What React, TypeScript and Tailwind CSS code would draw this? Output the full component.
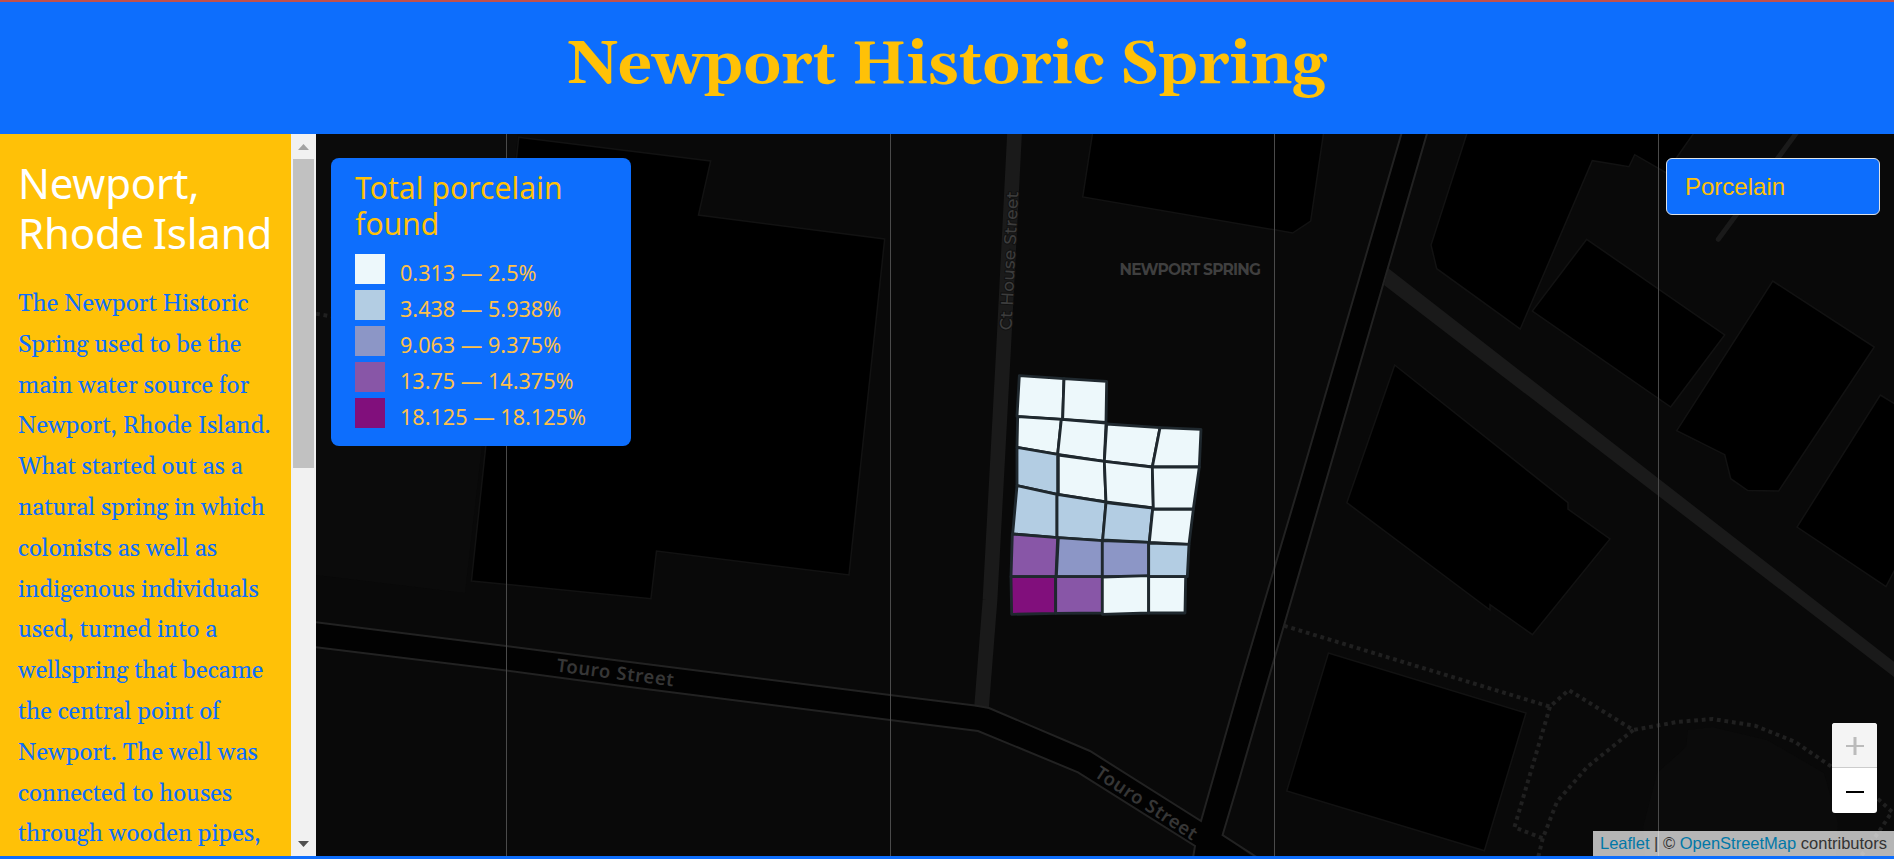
const PALETTE = ["#edf8fb", "#b3cde3", "#8c96c6", "#8856a7", "#810f7c"];

const LEGEND = [
  { color: "bg-[#edf8fb]", label: "0.313 — 2.5%" },
  { color: "bg-[#b3cde3]", label: "3.438 — 5.938%" },
  { color: "bg-[#8c96c6]", label: "9.063 — 9.375%" },
  { color: "bg-[#8856a7]", label: "13.75 — 14.375%" },
  { color: "bg-[#810f7c]", label: "18.125 — 18.125%" },
];

const BUILDINGS = [
  "518.7,137.3 710.7,161 698.5,215 884.7,239 849,575 656.5,551 651,598.7 471.4,581",
  "1093,130 1082.7,197 1292.7,233 1310.7,221 1324,130",
  "1468,130 1431,245 1436.7,268.7 1520.3,329 1592.3,160.7 1629,166.7 1634.7,154.7 1666,172.7 1696,130",
  "1586.7,239.3 1724.7,335 1670.7,407 1532.3,311",
  "1772.7,281 1874.3,347 1778.7,491 1747.7,490.5 1730.7,478.7 1724.7,454.7 1676.7,430.7",
  "1880.3,395 1900,407 1900,560 1886,586.7 1797,527",
  "1394.7,365 1568,502.7 1568,509 1610,539 1532.4,634.7 1490,604.7 1490,610 1346.8,502.7",
  "1328.4,653 1526,713 1484.4,850.7 1286.7,791",
];

const PATHS = [
  "M316 313.7L340 318",
  "M1284 625.7L1550 706.7L1568.7 690L1633.3 730L1677 722L1712.5 719L1755 725.7L1794.7 741.7L1830 765.7L1878 799L1892 811.7L1878 833L1861 856",
  "M1550 706.7L1514.4 827.3L1542.8 838.3",
  "M1633.3 730L1587.4 766.7L1557 801.7L1542.8 838.3L1538 858",
];

// Survey units: palette index followed by the outline, in thirds of a pixel.
const UNITS: [number, string][] = [
  [0, "178,77 312,86 308,208 171,199"],
  [0, "312,86 440,94 438,217 308,208"],
  [0, "173,200 304,208 293,313 171,292"],
  [0, "304,208 438,219 433,334 293,313"],
  [0, "440,222 600,233 577,351 433,334"],
  [0, "600,233 723,238 718,351 577,351"],
  [1, "171,292 293,313 293,433 171,407"],
  [0, "295,315 433,334 438,456 295,433"],
  [0, "433,334 577,351 580,474 438,456"],
  [0, "577,351 718,351 700,477 580,477"],
  [1, "171,407 291,433 291,563 158,552"],
  [1, "291,433 438,456 428,572 291,563"],
  [1, "438,458 578,474 568,577 428,570"],
  [0, "578,478 700,478 687,583 568,577"],
  [3, "157,552 293,563 288,680 153,680"],
  [2, "295,563 427,572 427,680 289,680"],
  [2, "427,572 566,577 566,679 427,680"],
  [1, "566,579 687,583 682,680 566,679"],
  [4, "153,680 287,680 287,790 155,793"],
  [3, "287,680 427,680 427,789 287,790"],
  [0, "427,681 566,677 566,789 427,793"],
  [0, "566,680 677,680 675,789 566,789"],
];

const TILE_EDGES = [506.5, 890.5, 1274.5, 1658.5];

function MapCanvas() {
  return (
    <svg
      className="block h-full w-full"
      viewBox="316 134 1578 722"
      preserveAspectRatio="none"
    >
      <rect x="316" y="134" width="1578" height="722" fill="#090909" />
      <polygon points="316,134 518,134 465,593 316,575" fill="#0b0b0b" />
      <polygon
        points="1688,730 1712,727 1767,740 1824,773 1838,823 1836,856 1645,856 1643,827 1657,773 1686,747"
        fill="#0b0b0b"
      />
      {PATHS.map((d) => (
        <path key={d} d={d} fill="none" stroke="#202020" strokeWidth="4" strokeDasharray="3.8 3.8" />
      ))}
      {BUILDINGS.map((points) => (
        <polygon key={points} points={points} fill="#000" stroke="#121212" strokeWidth="1.5" />
      ))}
      <path d="M1800 128L1718.3 239.3" stroke="#1a1a1a" strokeWidth="5" strokeLinecap="round" />
      <polygon points="1388.3,268.3 1894,661.7 1894,677 1384,285" fill="#1a1a1a" />
      <path
        d="M1014.7 130L1003.5 350L990 600L981.5 708"
        fill="none"
        stroke="#1a1a1a"
        strokeWidth="14.7"
      />
      <polygon
        points="310,621.5 620,660.7 890,695 989,708 1090,751 1201,821 1300.5,480 1401.3,134 1427,134 1326.3,480 1222.6,835 1256,860 1193,860 1195,846 1078,772 978,731 890,720 620,685.7 310,646.5"
        fill="#020202"
      />
      <g fill="none" stroke="#222" strokeWidth="2">
        <path d="M310 621.5L506 646L620 660.7L890 695L975 705.5L989 708L1090 751L1201 821L1240 684L1300.5 480L1402.5 130" />
        <path d="M310 646.5L506 670.5L620 685.7L890 720L978 731L1078 772.3L1195 846L1193 858" />
        <path d="M1428 130L1326.3 480L1240 776.7L1222.6 835L1258 858" />
      </g>
      <g className="font-['Noto_Sans',sans-serif]" fill="#363636" fontWeight="600">
        <text transform="translate(556 671.5) rotate(7.3)" fontSize="18.5" textLength="118">
          Touro Street
        </text>
        <text transform="translate(1093.5 776) rotate(33.3)" fontSize="18.5" textLength="118">
          Touro Street
        </text>
      </g>
      <text
        className="font-[Montserrat,Inter,sans-serif]"
        x="1119.5"
        y="275"
        fontSize="15.5"
        fontWeight="700"
        fill="#3f3f3f"
        textLength="141.5"
      >
        NEWPORT SPRING
      </text>
      <text
        className="font-[Montserrat,Inter,sans-serif]"
        transform="translate(1011.5 330.5) rotate(-87.2)"
        fontSize="17"
        fontWeight="500"
        fill="#3c3c3c"
        stroke="#111"
        strokeWidth="2"
        paintOrder="stroke"
        textLength="139"
      >
        Ct House Street
      </text>
      {TILE_EDGES.map((x) => (
        <path key={x} d={`M${x} 134V856`} stroke="#4a4a4a" strokeWidth="1" />
      ))}
      <g transform="translate(960 350) scale(.33333)" stroke="#1f282e" strokeWidth="8.5" strokeLinejoin="round">
        {UNITS.map(([shade, points]) => (
          <polygon key={points} points={points} fill={PALETTE[shade]} />
        ))}
      </g>
    </svg>
  );
}

function Scrollbar() {
  return (
    <div className="flex w-[25px] shrink-0 flex-col items-center bg-[#f1f1f1]">
      <div className="flex h-[25px] items-center justify-center">
        <svg width="11" height="6" viewBox="0 0 11 6">
          <path d="M5.5 0L11 6H0Z" fill="#a3a3a3" />
        </svg>
      </div>
      <div className="h-[309px] w-[21px] bg-[#c1c1c1]" />
      <div className="mt-auto flex h-[25px] items-center justify-center">
        <svg width="11" height="6" viewBox="0 0 11 6">
          <path d="M0 0H11L5.5 6Z" fill="#505050" />
        </svg>
      </div>
    </div>
  );
}

function Legend() {
  return (
    <div className="absolute top-6 left-[15px] h-[288px] w-[300px] rounded-lg bg-[#0d6efd] px-6 pt-3 font-['Noto_Sans',sans-serif] text-[#ffc107]">
      <h4 className="mb-3 text-[30px] leading-[36px] tracking-[0.08px]">Total porcelain found</h4>
      <ul>
        {LEGEND.map((row) => (
          <li key={row.label} className="flex h-9 text-[21.6px]">
            <span className={`mr-[15px] h-[30px] w-[30px] ${row.color}`} />
            <span className="pt-px leading-9 whitespace-nowrap text-[#fdc04a]">{row.label}</span>
          </li>
        ))}
      </ul>
    </div>
  );
}

export default function App() {
  return (
    <div className="flex h-[859px] w-full flex-col overflow-hidden border-t-2 border-[#c0504d] bg-[#0d6efd]">
      <header className="flex h-[132px] shrink-0 justify-center pt-[28px]">
        <h1 className="font-[Georgia,Gelasio,'DejaVu_Serif',serif] text-[60px] leading-[72px] font-bold whitespace-nowrap text-[#ffc107]">
          Newport Historic Spring
        </h1>
      </header>
      <main className="flex h-[722px] shrink-0">
        <aside className="flex w-[316px] shrink-0 overflow-hidden bg-[#ffc107]">
          <div className="w-[291px] pt-6 pl-[18px]">
            <h2 className="mb-[26px] font-['Noto_Sans',sans-serif] text-[42px] leading-[50px] tracking-[-0.2px] whitespace-nowrap text-white [word-spacing:-2px]">
              Newport,
              <br />
              Rhode Island
            </h2>
            <p className="font-[Georgia,Gelasio,'DejaVu_Serif',serif] text-2xl leading-[40.8px] whitespace-pre text-[#0d6efd]">
              {`The Newport Historic
Spring used to be the
main water source for
Newport, Rhode Island.
What started out as a
natural spring in which
colonists as well as
indigenous individuals
used, turned into a
wellspring that became
the central point of
Newport. The well was
connected to houses
through wooden pipes,`}
            </p>
          </div>
          <Scrollbar />
        </aside>
        <section className="relative min-w-0 flex-1 overflow-hidden">
          <MapCanvas />
          <Legend />
          <div className="absolute top-6 right-[14px] flex h-[57px] w-[214px] items-center rounded-md border border-[#dee2e6] bg-[#0d6efd] pl-[18px] font-['Liberation_Sans',sans-serif] text-2xl text-[#ffc107]">
            Porcelain
          </div>
          <div className="absolute right-[17px] bottom-[43px] flex h-[90px] w-[45px] flex-col overflow-hidden rounded-[3px] bg-white">
            <button className="flex h-[45px] items-center justify-center border-b border-[#ccc] bg-[#f4f4f4] pt-0.5">
              <svg width="18" height="18" viewBox="0 0 18 18" fill="#bbb">
                <path d="M0 8H18V10H0Z M7.5 0H10.5V18H7.5Z" />
              </svg>
            </button>
            <button className="flex h-[45px] items-center justify-center pt-[3px]">
              <svg width="18" height="2" viewBox="0 0 18 2">
                <path d="M0 0H18V2H0Z" fill="#000" />
              </svg>
            </button>
          </div>
          <div className="absolute right-0 bottom-0 flex h-[25px] w-[301px] items-center justify-center bg-white/70 font-['Liberation_Sans',sans-serif] text-[16.5px] whitespace-pre text-[#333]">
            <span className="text-[#0078a8]">Leaflet</span>
            {" | © "}
            <span className="text-[#0078a8]">OpenStreetMap</span>
            {" contributors"}
          </div>
        </section>
      </main>
    </div>
  );
}
